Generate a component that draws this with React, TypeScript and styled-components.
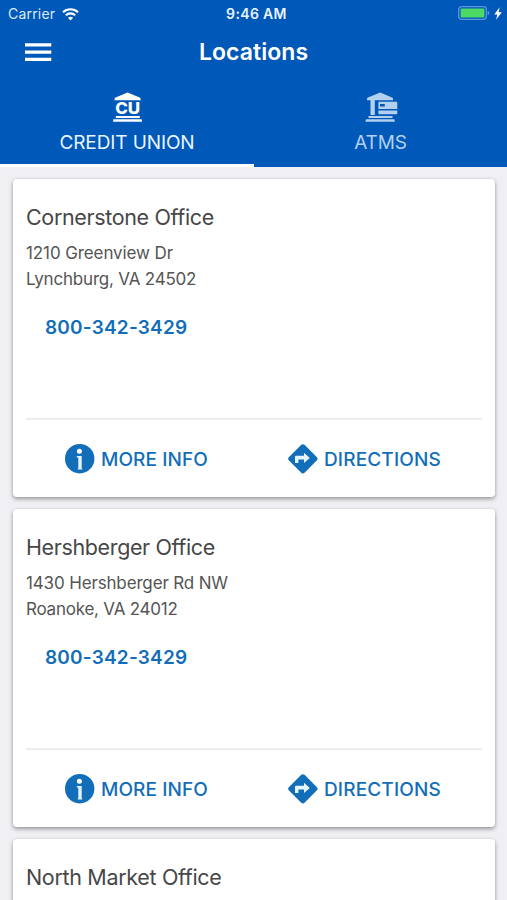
import React from 'react';
import styled, { createGlobalStyle } from 'styled-components';

const Global = createGlobalStyle`
  *, *::before, *::after { box-sizing: border-box; }
  html, body { margin: 0; padding: 0; }
  body {
    background: #efeff4;
    font-family: Inter, "Liberation Sans", sans-serif;
    overflow: hidden;
  }
  button { border: 0; padding: 0; background: none; font: inherit; color: inherit; }
  h1, h2, p { margin: 0; }
  svg { display: block; flex: none; }
`;

const Screen = styled.div`
  width: 507px;
  height: 900px;
  overflow: hidden;
  background: #efeff4;
`;

const Header = styled.header`
  height: 167px;
  background: #0058b8;
  color: #fff;
  display: flex;
  flex-direction: column;
`;

const StatusBar = styled.div`
  height: 28px;
  padding: 0 5px 0 8px;
  display: grid;
  grid-template-columns: 1fr auto 1fr;
  align-items: center;
  line-height: 28px;
`;

const Carrier = styled.div`
  display: flex;
  align-items: center;
  gap: 7px;
  font-size: 14px;
  letter-spacing: 0.2px;
  color: #dcebfa;
`;

const Time = styled.div`
  padding-left: 3px;
  font-size: 14px;
  font-weight: 600;
  letter-spacing: 0.35px;
  color: #e8f3ff;
`;

const Power = styled.div`
  display: flex;
  justify-content: flex-end;
  align-items: center;
  gap: 3px;
  padding-bottom: 2px;
`;

const NavBar = styled.div`
  height: 49px;
  display: grid;
  grid-template-columns: 77px 1fr 77px;
  align-items: center;
`;

const MenuButton = styled.button`
  padding-left: 25px;
`;

const PageTitle = styled.h1`
  padding-bottom: 1px;
  text-align: center;
  font-size: 23px;
  line-height: 48px;
  font-weight: 600;
  letter-spacing: 0.05px;
`;

const Tabs = styled.div`
  flex: 1;
  display: grid;
  grid-template-columns: 254px 253px;
`;

const Tab = styled.button<{ $active?: boolean }>`
  display: flex;
  flex-direction: column;
  align-items: center;
  padding-top: 15px;
  font-size: 19px;
  color: ${(p) => (p.$active ? '#eaf6ff' : '#b3d0ef')};
  border-bottom: 3px solid ${(p) => (p.$active ? '#fff' : 'transparent')};
`;

const TabLabel = styled.span<{ $spacing: number }>`
  margin-top: 8px;
  line-height: 26px;
  letter-spacing: ${(p) => p.$spacing}px;
`;

const List = styled.main`
  padding: 12px 12px 0 13px;
  display: flex;
  flex-direction: column;
  gap: 12px;
`;

const Card = styled.article`
  height: 318px;
  flex: none;
  padding: 0 13px;
  background: #fff;
  border-radius: 4px;
  box-shadow: 0 2px 4px rgba(0, 0, 0, 0.36), 0 0 3px rgba(0, 0, 0, 0.06);
  display: flex;
  flex-direction: column;
`;

const Details = styled.div`
  height: 239px;
  padding-top: 22px;
`;

const Name = styled.h2<{ $spacing: number }>`
  font-size: 21.5px;
  line-height: 32px;
  font-weight: 400;
  letter-spacing: ${(p) => p.$spacing}px;
  color: #474747;
`;

const Address = styled.p`
  margin-top: 7px;
  font-size: 17px;
  line-height: 26px;
  color: #555;
`;

const AddressLine = styled.span<{ $spacing: number }>`
  display: block;
  letter-spacing: ${(p) => p.$spacing}px;
`;

const Phone = styled.p`
  margin-top: 23px;
  padding-left: 19px;
  font-size: 19px;
  line-height: 26px;
  font-weight: 600;
  letter-spacing: 0.2px;
  color: #126eb8;
`;

const Actions = styled.div`
  height: 79px;
  border-top: 2px solid #ececee;
  display: grid;
  grid-template-columns: 223px 1fr;
`;

const Action = styled.button<{ $spacing: number }>`
  display: flex;
  align-items: center;
  gap: 6px;
  padding-left: 39px;
  font-size: 19px;
  font-weight: 500;
  letter-spacing: ${(p) => p.$spacing}px;
  color: #126eb8;
`;

const ActionLabel = styled.span`
  padding-top: 1px;
`;

const WifiIcon = () => (
  <svg width="17" height="13" viewBox="0 0 17 13" fill="none" stroke="#fff">
    <path d="M1 4.3C5.2.3 11.8.3 16 4.3" strokeWidth="2.1" />
    <path d="M3.8 7.2c2.7-2.5 6.7-2.5 9.4 0" strokeWidth="2.1" />
    <path d="M8.5 12.5 5.9 9.8c1.5-1.4 3.7-1.4 5.2 0Z" fill="#fff" stroke="none" />
  </svg>
);

const BatteryIcon = () => (
  <svg width="33" height="14" viewBox="0 0 33 14">
    <rect x="0.7" y="0.7" width="27.6" height="12.6" rx="2.8" fill="none" stroke="#5c97d8" strokeWidth="1.3" />
    <rect x="2.6" y="2.5" width="23.8" height="9" rx="1" fill="#4cd964" />
    <path d="M29.7 4.7c2 .6 2 4 0 4.6Z" fill="#5c97d8" />
  </svg>
);

const BoltIcon = () => (
  <svg width="8" height="13" viewBox="0 0 8 13">
    <path d="M5.6.3.3 7.4h3L2.1 12.8 7.8 5.3H4.7Z" fill="#fff" />
  </svg>
);

const MenuIcon = () => (
  <svg width="27" height="19" viewBox="0 0 27 19" fill="#fff">
    <path d="M0 .2h26.3v3.2H0zM0 7.5h26.3v3.2H0zM0 14.8h26.3v3.2H0z" />
  </svg>
);

const IconLetters = styled.text`
  font: 800 16.2px Inter, sans-serif;
`;

const CreditUnionIcon = () => (
  <svg width="30" height="30" viewBox="0 0 30 30" fill="#fff">
    <path d="M15.6.4 27.6 5.4q1 .4 1 1.3v1.5H2.6V6.7q0-.9 1-1.3Z" />
    <IconLetters x="3.2" y="22" textLength="25" lengthAdjust="spacingAndGlyphs">CU</IconLetters>
    <path d="M3.8 23.9h24v2.1h-24zM2 27.2h27.2q.7 0 .7.7v1.9H1.2v-1.9q0-.7.8-.7Z" />
  </svg>
);

const AtmIcon = () => (
  <svg width="34" height="30" viewBox="0 0 34 30" fill="#b3d0ef">
    <path d="M16.2.4 28 5.4q1 .4 1 1.3v1.5H3V6.7q0-.9 1-1.3Z" />
    <path d="M6.5 8h4.3v15H6.5z" />
    <path fillRule="evenodd" d="M15.4 9.8h16.9q1 0 1 1v10.4q0 1-1 1H15.4q-1 0-1-1V10.8q0-1 1-1ZM16 12v2.4h4.8V12ZM14.4 17.1v1.5h18.9v-1.5Z" />
    <path d="M4.5 23.9h24V26h-24zM2.4 27.2h27.6q.7 0 .7.7v1.9H1.6v-1.9q0-.7.8-.7Z" />
  </svg>
);

const InfoIcon = () => (
  <svg width="30" height="30" viewBox="0 0 30 30">
    <circle cx="14.7" cy="14.7" r="14.7" fill="#126eb8" />
    <circle cx="14.4" cy="7.2" r="2.5" fill="#fff" />
    <path d="M11.8 12h4.9v12.4h.5v1.2h-4.4v-1.2h.5V13.6h-1.5Z" fill="#e5f3fa" />
  </svg>
);

const DirectionsIcon = () => (
  <svg width="30" height="30" viewBox="0 0 30 30">
    <path d="m13 1.1-12 11.8a2.6 2.6 0 0 0 0 3.6l12 12a2.7 2.7 0 0 0 3.8 0l11.9-12a2.6 2.6 0 0 0 0-3.6L16.8 1.1a2.7 2.7 0 0 0-3.8 0Z" fill="#126eb8" />
    <path d="M7 19v-6q0-1.2 1.2-1.2H16V8.8l5.8 5.1-5.8 5v-3.4h-5.6V19Z" fill="#e5f3fa" />
  </svg>
);

type Line = { text: string; spacing: number };
type Office = { name: Line; address: Line[]; phone: string };

const offices: Office[] = [
  {
    name: { text: 'Cornerstone Office', spacing: -0.35 },
    address: [
      { text: '1210 Greenview Dr', spacing: -0.1 },
      { text: 'Lynchburg, VA 24502', spacing: -0.2 },
    ],
    phone: '800-342-3429',
  },
  {
    name: { text: 'Hershberger Office', spacing: -0.37 },
    address: [
      { text: '1430 Hershberger Rd NW', spacing: -0.15 },
      { text: 'Roanoke, VA 24012', spacing: -0.23 },
    ],
    phone: '800-342-3429',
  },
  { name: { text: 'North Market Office', spacing: -0.33 }, address: [], phone: '' },
];

const OfficeCard = ({ office }: { office: Office }) => (
  <Card>
    <Details>
      <Name $spacing={office.name.spacing}>{office.name.text}</Name>
      <Address>
        {office.address.map((line) => (
          <AddressLine key={line.text} $spacing={line.spacing}>{line.text}</AddressLine>
        ))}
      </Address>
      {office.phone && <Phone>{office.phone}</Phone>}
    </Details>
    {office.phone && (
      <Actions>
        <Action $spacing={0.1}><InfoIcon /><ActionLabel>MORE INFO</ActionLabel></Action>
        <Action $spacing={0.15}><DirectionsIcon /><ActionLabel>DIRECTIONS</ActionLabel></Action>
      </Actions>
    )}
  </Card>
);

export default function App() {
  return (
    <Screen>
      <Global />
      <Header>
        <StatusBar>
          <Carrier>Carrier<WifiIcon /></Carrier>
          <Time>9:46 AM</Time>
          <Power><BatteryIcon /><BoltIcon /></Power>
        </StatusBar>
        <NavBar>
          <MenuButton aria-label="Menu"><MenuIcon /></MenuButton>
          <PageTitle>Locations</PageTitle>
        </NavBar>
        <Tabs>
          <Tab $active><CreditUnionIcon /><TabLabel $spacing={-0.1}>CREDIT UNION</TabLabel></Tab>
          <Tab><AtmIcon /><TabLabel $spacing={-0.2}>ATMS</TabLabel></Tab>
        </Tabs>
      </Header>
      <List>
        {offices.map((office) => <OfficeCard key={office.name.text} office={office} />)}
      </List>
    </Screen>
  );
}
